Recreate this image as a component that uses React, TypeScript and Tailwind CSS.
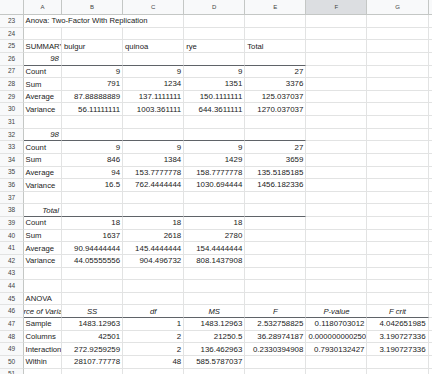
type Cell = {
  t?: string;
  a?: 'l' | 'r' | 'c';
  i?: boolean;
  span?: number;
};

type Row = { n: number; c: Cell[]; thick?: number };

const L = (t: string): Cell => ({ t, a: 'l' });
const R = (t: string): Cell => ({ t, a: 'r' });
const C = (t: string): Cell => ({ t, a: 'c', i: true });
const E: Cell = {};

// thick = number of columns (from A) that get a dark bottom border
const rows: Row[] = [
  { n: 23, c: [{ t: 'Anova: Two-Factor With Replication', a: 'l', span: 3 }, E, E, E, E] },
  { n: 24, c: [E, E, E, E, E, E, E] },
  { n: 25, c: [L('SUMMARY'), L('bulgur'), L('quinoa'), L('rye'), L('Total'), E, E] },
  { n: 26, c: [{ t: '98', a: 'r', i: true }, E, E, E, E, E, E], thick: 5 },
  { n: 27, c: [L('Count'), R('9'), R('9'), R('9'), R('27'), E, E] },
  { n: 28, c: [L('Sum'), R('791'), R('1234'), R('1351'), R('3376'), E, E] },
  { n: 29, c: [L('Average'), R('87.88888889'), R('137.1111111'), R('150.1111111'), R('125.037037'), E, E] },
  { n: 30, c: [L('Variance'), R('56.11111111'), R('1003.361111'), R('644.3611111'), R('1270.037037'), E, E] },
  { n: 31, c: [E, E, E, E, E, E, E] },
  { n: 32, c: [{ t: '98', a: 'r', i: true }, E, E, E, E, E, E], thick: 5 },
  { n: 33, c: [L('Count'), R('9'), R('9'), R('9'), R('27'), E, E] },
  { n: 34, c: [L('Sum'), R('846'), R('1384'), R('1429'), R('3659'), E, E] },
  { n: 35, c: [L('Average'), R('94'), R('153.7777778'), R('158.7777778'), R('135.5185185'), E, E] },
  { n: 36, c: [L('Variance'), R('16.5'), R('762.4444444'), R('1030.694444'), R('1456.182336'), E, E] },
  { n: 37, c: [E, E, E, E, E, E, E] },
  { n: 38, c: [{ t: 'Total', a: 'r', i: true }, E, E, E, E, E, E], thick: 5 },
  { n: 39, c: [L('Count'), R('18'), R('18'), R('18'), E, E, E] },
  { n: 40, c: [L('Sum'), R('1637'), R('2618'), R('2780'), E, E, E] },
  { n: 41, c: [L('Average'), R('90.94444444'), R('145.4444444'), R('154.4444444'), E, E, E] },
  { n: 42, c: [L('Variance'), R('44.05555556'), R('904.496732'), R('808.1437908'), E, E, E] },
  { n: 43, c: [E, E, E, E, E, E, E] },
  { n: 44, c: [E, E, E, E, E, E, E] },
  { n: 45, c: [L('ANOVA'), E, E, E, E, E, E] },
  { n: 46, c: [C('Source of Variation'), C('SS'), C('df'), C('MS'), C('F'), C('P-value'), C('F crit')], thick: 7 },
  { n: 47, c: [L('Sample'), R('1483.12963'), R('1'), R('1483.12963'), R('2.532758825'), R('0.1180703012'), R('4.042651985')] },
  { n: 48, c: [L('Columns'), R('42501'), R('2'), R('21250.5'), R('36.28974187'), L('0.000000000250737'), R('3.190727336')] },
  { n: 49, c: [L('Interaction'), R('272.9259259'), R('2'), R('136.462963'), R('0.2330394908'), R('0.7930132427'), R('3.190727336')] },
  { n: 50, c: [L('Within'), R('28107.77778'), R('48'), R('585.5787037'), E, E, E] },
  { n: 51, c: [E, E, E, E, E, E, E] },
];

const widths = [38, 61.1, 61.1, 61.1, 61.1, 61.1, 61.1];
const letters = ['A', 'B', 'C', 'D', 'E', 'F', 'G'];

export default function App() {
  return (
    <div className="w-[432px] h-[374px] overflow-hidden bg-white text-[#222] font-['Liberation_Sans',Arial,sans-serif]">
      {/* column header */}
      <div className="flex h-[15px] bg-[#f8f9fa] border-b border-[#c4c7c5]">
        <div className="w-[24px] shrink-0 border-r border-[#c4c7c5]" />
        {letters.map((l, k) => (
          <div
            key={l}
            style={{ width: widths[k] }}
            className={`shrink-0 flex items-center justify-center border-r border-[#c4c7c5] text-[6px] text-[#444] ${
              l === 'F' ? 'bg-[#dcdee1]' : ''
            }`}
          >
            {l}
          </div>
        ))}
        <div className="flex-1" />
      </div>

      {rows.map((r) => {
        const cells: JSX.Element[] = [];
        let col = 0;
        r.c.forEach((c, k) => {
          if (col >= 7) return;
          const span = c.span ?? 1;
          let w = 0;
          for (let s = 0; s < span; s++) w += widths[col + s];
          const dark = r.thick !== undefined && col < r.thick;
          const just = c.a === 'r' ? 'justify-end' : c.a === 'c' ? 'justify-center' : 'justify-start';
          const size = c.a === 'r' ? 'text-[7.9px]' : 'text-[7.7px]';
          const pad = col === 0 ? 'pl-[1.5px]' : 'pl-[2px]';
          cells.push(
            <div
              key={k}
              style={{ width: w }}
              className={`shrink-0 flex items-center pt-[1px] ${just} overflow-hidden whitespace-nowrap ${pad} pr-[2px] ${size} leading-none border-r border-[#e2e3e3] border-b ${
                dark ? 'border-b-[#5f6368]' : 'border-b-[#e2e3e3]'
              } ${c.i ? 'italic' : ''}`}
            >
              {c.t}
            </div>
          );
          col += span;
        });
        return (
          <div key={r.n} className="flex h-[12.63px]">
            <div className="w-[24px] shrink-0 flex items-center justify-center bg-[#f8f9fa] border-r border-b border-r-[#c4c7c5] border-b-[#e2e3e3] text-[6.5px] text-[#444]">
              {r.n}
            </div>
            {cells}
            <div className="flex-1 border-b border-[#e2e3e3]" />
          </div>
        );
      })}
    </div>
  );
}
